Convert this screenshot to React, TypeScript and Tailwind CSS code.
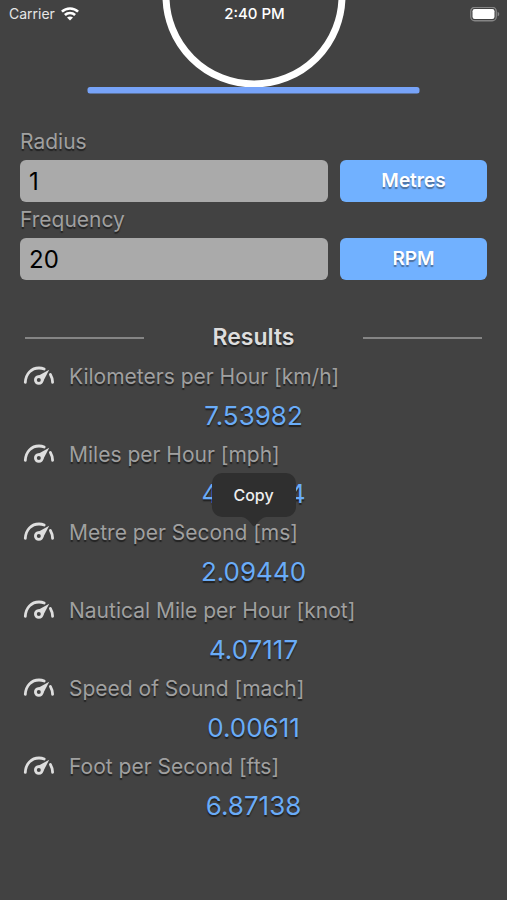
import { useState } from "react";

const results = [
  { label: "Kilometers per Hour [km/h]", value: "7.53982" },
  { label: "Miles per Hour [mph]", value: "4.68504", copied: true },
  { label: "Metre per Second [ms]", value: "2.09440" },
  { label: "Nautical Mile per Hour [knot]", value: "4.07117" },
  { label: "Speed of Sound [mach]", value: "0.00611" },
  { label: "Foot per Second [fts]", value: "6.87138" },
];

function GaugeIcon() {
  return (
    <svg className="h-6 w-8 flex-none" viewBox="0 0 32 24" fill="none" aria-hidden="true">
      <path d="M2.3 17.4C2.8 8.5 8.5 3 16 3C18 3 19.8 3.4 21.2 4" stroke="#dedede" strokeWidth="2.8" strokeLinecap="round" />
      <path d="M27.4 9.4C28.8 11.7 29.5 14.2 29.6 17.4" stroke="#dedede" strokeWidth="2.8" strokeLinecap="round" />
      <path d="M26.2 4.8L12.6 12.2L19.6 17.6Z" fill="#dedede" />
      <circle cx="15.8" cy="15" r="3.4" fill="#424242" stroke="#dedede" strokeWidth="2.8" />
    </svg>
  );
}

function StatusBar() {
  return (
    <div className="absolute inset-x-0 top-0 grid h-7 grid-cols-3 items-center pl-[9px] pr-[7px] text-sm text-[#e6e6e6]">
      <div className="flex items-center gap-1.5">
        <span>Carrier</span>
        <svg className="h-[14px] w-[18px]" viewBox="0 0 18 14" fill="none" stroke="#ffffff" strokeWidth="2.6" aria-hidden="true">
          <path d="M0.9 4.6C5.4 0.4 12.6 0.4 17.1 4.6" />
          <path d="M3.9 8C6.7 5.3 11.3 5.3 14.1 8" />
          <path d="M9 13.6L6 10.5C7.7 9 10.3 9 12 10.5Z" fill="#ffffff" stroke="none" />
        </svg>
      </div>
      <span className="text-center text-[15px] font-medium text-white">2:40 PM</span>
      <svg className="h-[15px] w-[30px] justify-self-end" viewBox="0 0 30 15" aria-hidden="true">
        <rect x="0.75" y="0.25" width="25.5" height="13.5" rx="4" fill="none" stroke="#858585" strokeWidth="1.3" />
        <rect x="2.5" y="2" width="22" height="10" rx="2.2" fill="#ffffff" />
        <path d="M27.6 4.7C29.8 5.5 29.8 8.5 27.6 9.3Z" fill="#858585" />
      </svg>
    </div>
  );
}

function Field({ id, label, unit, initial }: { id: string; label: string; unit: string; initial: string }) {
  const [value, setValue] = useState(initial);

  return (
    <div>
      <label htmlFor={id} className="block h-9 text-[21px] leading-9 text-[#a0a0a0] [text-shadow:0_2px_1px_#222222]">
        {label}
      </label>
      <div className="flex gap-3">
        <input
          id={id}
          value={value}
          onChange={(e) => setValue(e.target.value)}
          className="h-[42px] min-w-0 flex-1 rounded-md bg-[#aaaaaa] px-[9px] text-2xl text-black outline-none"
        />
        <button
          type="button"
          className="h-[42px] w-[147px] rounded-md bg-[#71b1ff] text-[19px] font-semibold text-white [text-shadow:0_2px_1px_#4d6f9c]"
        >
          {unit}
        </button>
      </div>
    </div>
  );
}

export default function App() {
  return (
    <div className="min-h-screen bg-[#424242] font-['Inter','Liberation_Sans',sans-serif]">
      <header className="relative">
        <svg className="mx-auto block h-[94px] w-[334px]" viewBox="0 0 334 94" aria-hidden="true">
          <circle cx="167" cy="-4" r="88" fill="none" stroke="#ffffff" strokeWidth="7" />
          <rect x="0.5" y="87" width="332" height="6.5" rx="2.5" fill="#77a3f8" />
        </svg>
        <StatusBar />
      </header>

      <main className="px-5 pt-[30px]">
        <form className="flex flex-col">
          <Field id="radius" label="Radius" unit="Metres" initial="1" />
          <Field id="frequency" label="Frequency" unit="RPM" initial="20" />
        </form>

        <div className="mt-[38px] flex h-[39px] items-center justify-between px-[5px]">
          <div className="h-[2px] w-[26%] bg-[#858585]" />
          <h2 className="text-[23px] font-semibold text-[#dddddd] [text-shadow:0_2px_1px_#222222]">Results</h2>
          <div className="h-[2px] w-[26%] bg-[#858585]" />
        </div>

        <dl>
          {results.map((result) => (
            <div key={result.label}>
              <dt className="flex h-[39px] items-center gap-[14px] pl-[3px] text-[21px] text-[#a0a0a0] [text-shadow:0_2px_1px_#222222]">
                <GaugeIcon />
                {result.label}
              </dt>
              <dd className="relative flex h-[39px] items-center justify-center text-[26px] text-[#6aacf8] [text-shadow:0_2px_1px_#222222]">
                {result.value}
                {result.copied && (
                  <div className="absolute -top-px left-1/2 z-10 -translate-x-1/2">
                    <button type="button" className="block h-11 w-[84px] rounded-[10px] bg-[#2f2f2f] text-base font-medium text-[#eeeeee] [text-shadow:none]">
                      Copy
                    </button>
                    <svg className="mx-auto block h-[10px] w-6" viewBox="0 0 24 10" fill="#2f2f2f" aria-hidden="true">
                      <path d="M0 0H24C20 0.5 18 3 15 6.5L13.5 8.5Q12 10 10.5 8.5L9 6.5C6 3 4 0.5 0 0Z" />
                    </svg>
                  </div>
                )}
              </dd>
            </div>
          ))}
        </dl>
      </main>
    </div>
  );
}
